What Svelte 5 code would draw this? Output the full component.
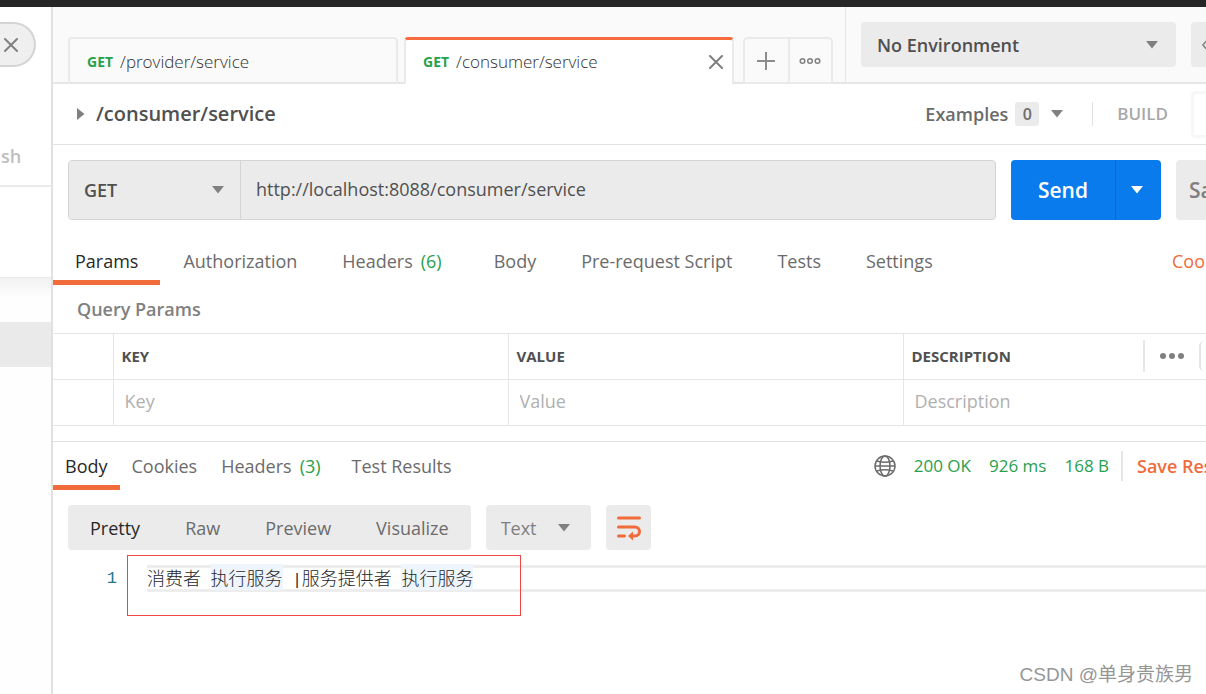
<script>
  const requestTabs = [
    { label: 'Params', active: true },
    { label: 'Authorization' },
    { label: 'Headers', count: 6 },
    { label: 'Body' },
    { label: 'Pre-request Script' },
    { label: 'Tests' },
    { label: 'Settings' }
  ];
  const responseTabs = [
    { label: 'Body', active: true },
    { label: 'Cookies' },
    { label: 'Headers', count: 3 },
    { label: 'Test Results' }
  ];
  const views = ['Pretty', 'Raw', 'Preview', 'Visualize'];
  let view = $state('Pretty');
  let url = $state('http://localhost:8088/consumer/service');
</script>

{#snippet caret()}
  <svg class="caret" width="12" height="8" viewBox="0 0 12 8" aria-hidden="true"><path d="M0 0h12L6 7.5z" /></svg>
{/snippet}

{#snippet cross()}
  <svg width="14" height="14" viewBox="0 0 14 14" aria-hidden="true"><path d="M1 1l12 12M13 1L1 13" fill="none" stroke="#808080" stroke-width="2" stroke-linecap="round" /></svg>
{/snippet}

{#snippet tabList(items)}
  {#each items as t}
    <button class="tab" class:active={t.active}>{t.label}{#if t.count}<span class="count">({t.count})</span>{/if}</button>
  {/each}
{/snippet}

<div class="app">
  <div class="titlebar"></div>
  <div class="columns">
    <aside class="sidebar">
      <div class="side-top">
        <button class="pill" aria-label="Clear filter">{@render cross()}</button>
        <span class="trash">sh</span>
      </div>
      <div class="side-tools"></div>
      <div class="side-list"><div class="side-selected"></div></div>
    </aside>

    <main>
      <header>
        <nav class="file-tabs">
          <button class="file-tab"><b>GET</b><span>/provider/service</span></button>
          <div class="file-tab current">
            <b>GET</b><span>/consumer/service</span>
            <button class="close" aria-label="Close tab">{@render cross()}</button>
          </div>
          <div class="tab-actions">
            <button aria-label="New tab"><svg width="18" height="18" viewBox="0 0 18 18"><path d="M9 0v18M0 9h18" fill="none" stroke="#8c8c8c" stroke-width="2" /></svg></button>
            <button aria-label="Tab options"><svg width="22" height="8" viewBox="0 0 22 8"><g fill="none" stroke="#808080" stroke-width="1.5"><circle cx="3.5" cy="4" r="2.3" /><circle cx="11" cy="4" r="2.3" /><circle cx="18.5" cy="4" r="2.3" /></g></svg></button>
          </div>
        </nav>
        <div class="environment">
          <div class="select env">
            <select aria-label="Environment"><option>No Environment</option></select>
            {@render caret()}
          </div>
          <button class="eye" aria-label="Environment quick look"><svg width="24" height="16" viewBox="0 0 24 16"><g fill="none" stroke="#808080" stroke-width="1.5"><path d="M1 8Q6 1 12 1t11 7q-5 7-11 7T1 8z" /><circle cx="12" cy="8" r="4" /></g></svg></button>
        </div>
      </header>

      <section class="title-row">
        <svg width="8" height="12" viewBox="0 0 8 12" aria-hidden="true"><path d="M0 0l7.5 6L0 12z" fill="#808080" /></svg>
        <h1>/consumer/service</h1>
        <button class="examples">Examples <span>0</span>{@render caret()}</button>
        <button class="build">BUILD</button>
        <div class="mode"></div>
      </section>

      <section class="request">
        <div class="address">
          <div class="select method">
            <select aria-label="Method"><option>GET</option></select>
            {@render caret()}
          </div>
          <input aria-label="Request URL" bind:value={url} />
        </div>
        <div class="send">
          <button>Send</button>
          <button class="more" aria-label="Send options">{@render caret()}</button>
        </div>
        <button class="save">Save</button>
      </section>

      <nav class="tabs request-tabs">
        {@render tabList(requestTabs)}
        <a class="cookies" href="#cookies">Cookies</a>
      </nav>

      <h2>Query Params</h2>
      <table>
        <colgroup><col class="check" /><col /><col /><col class="last" /></colgroup>
        <thead>
          <tr>
            <th></th><th>KEY</th><th>VALUE</th>
            <th>
              <div class="description">
                <span>DESCRIPTION</span>
                <button aria-label="Columns"><svg width="26" height="8" viewBox="0 0 26 8"><g fill="#808080"><circle cx="4" cy="4" r="3" /><circle cx="13" cy="4" r="3" /><circle cx="22" cy="4" r="3" /></g></svg></button>
                <i></i>
              </div>
            </th>
          </tr>
        </thead>
        <tbody>
          <tr>
            <td></td>
            <td><input aria-label="Key" placeholder="Key" /></td>
            <td><input aria-label="Value" placeholder="Value" /></td>
            <td><input aria-label="Description" placeholder="Description" /></td>
          </tr>
        </tbody>
      </table>

      <section class="response">
        <div class="tabs response-tabs">
          {@render tabList(responseTabs)}
          <div class="status">
            <svg width="22" height="22" viewBox="0 0 22 22" aria-hidden="true"><g fill="none" stroke="#6b6b6b" stroke-width="1.5"><circle cx="11" cy="11" r="10" /><ellipse cx="11" cy="11" rx="5" ry="10" /><path d="M3 6q8 2.500 16 0M3 16q8-2.500 16 0M1 11h20" /></g></svg>
            <span>200 OK</span><span>926 ms</span><span>168 B</span>
          </div>
          <button class="save-response">Save Response</button>
        </div>
        <div class="toolbar">
          <div class="views">
            {#each views as v}
              <button class:on={view === v} onclick={() => (view = v)}>{v}</button>
            {/each}
          </div>
          <div class="select format">
            <select aria-label="Format"><option>Text</option></select>
            {@render caret()}
          </div>
          <button class="wrap" aria-label="Wrap lines"><svg width="26" height="26" viewBox="0 0 26 26"><path d="M2.500 3h21M2.500 12H19a4.500 4.500 0 0 1 0 9h-3M2.500 21h6" fill="none" stroke="#f26b3a" stroke-width="3" stroke-linecap="round" /><path d="M12 21l5-4.500v9z" fill="#f26b3a" /></svg></button>
        </div>
        <div class="editor">
          <span class="line-number">1</span>
          <div class="line"><span>消费者</span>&nbsp;<mark>执行服务</mark>&nbsp;|<span>服务提供者</span>&nbsp;<mark>执行服务</mark></div>
          <div class="outline"></div>
        </div>
      </section>
    </main>
  </div>
  <div class="watermark">CSDN @单身贵族男</div>
</div>

<style>
  :global(body) { margin: 0; background: #fff; }
  .app, .app * { box-sizing: border-box; }
  .app {
    position: relative;
    display: flex;
    flex-direction: column;
    min-height: 100vh;
    overflow: hidden;
    color: #505050;
    font: 18px/24px 'Open Sans', 'Noto Sans CJK SC', sans-serif;
  }
  button, select, input {
    margin: 0;
    padding: 0;
    border: 0;
    border-radius: 0;
    outline: 0;
    background: none;
    color: inherit;
    font: inherit;
    appearance: none;
  }
  button { display: flex; align-items: center; flex-shrink: 0; white-space: nowrap; }
  svg { display: block; flex-shrink: 0; }
  .caret { fill: #808080; }
  .titlebar { height: 7px; background: #262626; }
  .columns { display: flex; flex: 1; }

  .sidebar {
    display: flex;
    flex-direction: column;
    flex: 0 0 53px;
    border-right: 2px solid #e1e1e1;
    overflow: hidden;
  }
  .side-top {
    display: flex;
    flex-direction: column;
    align-items: flex-start;
    gap: 77px;
    height: 180px;
    padding-top: 15px;
    border-bottom: 2px solid #eaeaea;
  }
  .pill {
    justify-content: flex-end;
    width: 36px;
    height: 45px;
    padding-right: 16px;
    border: 2px solid #d4d4d4;
    border-left: 0;
    border-radius: 0 23px 23px 0;
    background: #efefef;
  }
  .trash { padding-left: 1px; color: #bdbdbd; font-weight: 600; }
  .side-tools { height: 91px; border-bottom: 1px solid #eaeaea; }
  .side-list { flex: 1; padding-top: 44px; background: linear-gradient(#f2f2f2, #fefefe 20px); }
  .side-selected { height: 45px; background: #eaeaea; }

  main { flex: 1; min-width: 0; overflow: hidden; }
  header { display: flex; height: 77px; background: #fafafa; box-shadow: inset 0 -2px #e6e6e6; }
  .file-tabs {
    display: flex;
    align-items: flex-end;
    flex: 1;
    gap: 6px;
    min-width: 0;
    padding-left: 15px;
    overflow: hidden;
  }
  .file-tab {
    display: flex;
    align-items: center;
    gap: 7px;
    flex: 0 1 330px;
    height: 47px;
    padding: 0 9px 0 17px;
    border: 2px solid #eaeaea;
    border-bottom: 0;
    border-radius: 4px 4px 0 0;
    color: #303030;
    font-size: 17px;
    font-weight: 300;
    white-space: nowrap;
  }
  .file-tab b { color: #29a04c; font-size: 14px; font-weight: 700; }
  .current { border-top: 3px solid #f76b3c; background: #fff; }
  .close { margin-left: auto; }
  .tab-actions {
    display: flex;
    height: 47px;
    margin-left: 3px;
    border: 2px solid #eaeaea;
    border-radius: 5px 5px 0 0;
  }
  .tab-actions button { justify-content: center; width: 43px; padding-right: 2px; }
  .tab-actions button + button { border-left: 2px solid #eaeaea; }
  .environment {
    display: flex;
    gap: 15px;
    flex: 0 0 361px;
    height: 75px;
    padding: 15px 0 0 15px;
    border-left: 1px solid #e6e6e6;
    overflow: hidden;
  }
  .select { display: grid; align-items: center; flex-shrink: 0; border-radius: 4px; background: #ebebeb; }
  .select select { grid-area: 1 / 1; width: 100%; height: 100%; }
  .select .caret { grid-area: 1 / 1; justify-self: end; pointer-events: none; }
  .env { width: 315px; height: 45px; padding: 0 18px 0 16px; font-weight: 600; }
  .eye { width: 45px; height: 45px; padding-left: 11px; border-radius: 4px; background: #ebebeb; }

  .title-row { display: flex; align-items: center; height: 61px; padding-left: 24px; border-bottom: 1px solid #e1e1e1; }
  h1 { flex: 1; margin: 0 0 0 11px; font-size: 20px; font-weight: 600; }
  .examples { gap: 7px; padding-right: 29px; color: #6b6b6b; font-weight: 600; }
  .examples span { width: 24px; border-radius: 3px; background: #ebebeb; font-size: 16px; }
  .examples .caret { margin-left: 5px; }
  .build { height: 24px; padding: 0 23px 0 24px; border-left: 1px solid #e1e1e1; color: #a8a8a8; font-size: 17px; font-weight: 600; }
  .mode { width: 15px; height: 47px; border: 3px solid #f7f7f7; border-right: 0; border-radius: 5px 0 0 5px; }

  .request { display: flex; gap: 15px; padding: 15px 0 15px 15px; }
  .address { display: flex; flex: 1; height: 60px; border: 1px solid #d4d4d4; border-radius: 4px; background: #ebebeb; overflow: hidden; }
  .address input { flex: 1; min-width: 0; padding: 0 15px 2px; }
  .method { width: 172px; padding: 0 16px 0 15px; border-right: 1px solid #d4d4d4; border-radius: 0; font-weight: 600; }
  .send { display: flex; height: 60px; border-radius: 4px; background: #097bed; color: #fff; font-size: 21px; font-weight: 600; overflow: hidden; }
  .send button { justify-content: center; width: 104px; }
  .send .more { width: 46px; padding-right: 3px; border-left: 1px solid #0668cb; }
  .send .caret { fill: #fff; }
  .save { width: 30px; height: 60px; padding-left: 13px; border-radius: 4px 0 0 4px; background: #ebebeb; color: #808080; font-size: 21px; font-weight: 600; overflow: hidden; }

  .tabs { display: flex; color: #6b6b6b; }
  .tab { height: 48px; border-bottom: 5px solid transparent; }
  .active { border-color: #f26b3a; color: #282828; }
  .count { margin: 0 7px 0 8px; color: #29a04c; }
  .request-tabs { gap: 1px; height: 50px; }
  .request-tabs .tab { height: 50px; padding: 7px 22px 0; }
  .cookies { width: 34px; margin-left: auto; padding-top: 14px; color: #f26b3a; text-decoration: none; overflow: hidden; }
  h2 { margin: 0; padding: 12px 24px; color: #808080; font-size: 18px; font-weight: 600; }

  table { width: 100%; table-layout: fixed; border-collapse: collapse; }
  .check { width: 60px; }
  .last { width: 303px; }
  th, td { height: 46px; padding: 0 0 2px 8px; border: 1px solid #e6e6e6; text-align: left; }
  th:first-child, td:first-child { border-left: 0; }
  th:last-child, td:last-child { border-right: 0; }
  th { font-size: 15px; font-weight: 700; }
  td { padding-bottom: 4px; }
  td input { width: 100%; padding: 0 3px; }
  td input::placeholder { color: #b0b0b0; opacity: 1; }
  .description { display: flex; align-items: center; }
  .description button { height: 32px; margin-left: auto; padding: 0 14px; border-left: 2px solid #e6e6e6; }
  .description i { width: 7px; height: 30px; border-left: 2px solid #e6e6e6; border-radius: 5px 0 0 5px; }

  .response { margin-top: 15px; border-top: 1px solid #e1e1e1; }
  .response-tabs .tab { padding: 4px 12px 0; }
  .status { display: flex; align-items: center; gap: 18px; margin-left: auto; padding-right: 12px; color: #29a04c; font-size: 17px; white-space: nowrap; }
  .save-response { width: 85px; height: 30px; margin-top: 9px; padding-left: 14px; border-left: 2px solid #e6e6e6; color: #f26b3a; font-weight: 600; overflow: hidden; }
  .toolbar { display: flex; gap: 15px; padding: 15px; }
  .views { display: flex; gap: 45px; height: 45px; padding: 0 22px; border-radius: 4px; background: #ebebeb; color: #6b6b6b; }
  .views .on { color: #282828; }
  .format { width: 105px; height: 45px; padding: 0 21px 0 15px; color: #808080; }
  .wrap { justify-content: center; width: 45px; height: 45px; padding-left: 1px; border-radius: 4px; background: #ebebeb; }

  .editor { position: relative; display: flex; font-family: 'Liberation Mono', 'Noto Sans CJK SC', monospace; font-size: 16px; line-height: 28px; }
  .line-number { width: 64px; color: #237893; font-size: 17px; text-align: right; }
  .line { flex: 1; height: 27px; margin-left: 30px; border: 3px solid #ededed; border-width: 3px 0; color: #282828; line-height: 20px; white-space: nowrap; }
  .line span, .line mark { display: inline-block; font-family: 'Noto Sans CJK SC', sans-serif; font-size: 18px; font-weight: 300; line-height: 18px; }
  .line mark { margin: -4px 0; padding: 4px 0; background: #eff5fd; color: inherit; }
  /* Annotation frame over the first response line. */
  .outline { position: absolute; top: -10px; left: 74px; width: 394px; height: 61px; border: 1px solid #f04545; }
  .watermark { position: absolute; right: 13px; bottom: 7px; color: #969696; font-family: 'Liberation Sans', 'Noto Sans CJK SC', sans-serif; font-size: 19px; }
</style>
